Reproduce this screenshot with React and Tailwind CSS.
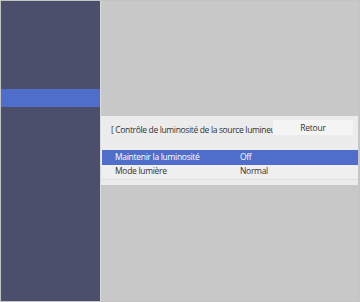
export default function App() {
  const rows = [
    { label: 'Maintenir la luminosité', value: 'Off', active: true },
    { label: 'Mode lumière', value: 'Normal', active: false },
  ];

  return (
    <div className="flex h-[302px] w-[360px] border border-[#c4c4c4] bg-[#c8c8c8] font-['Open_Sans',sans-serif] text-[#333]">
      <aside className="w-[99px] shrink-0 bg-[#4b4f6b] pt-[88px]">
        <div className="h-[18px] bg-[#4f6ecb]" />
      </aside>
      <div className="w-px shrink-0 bg-[#dadada]" />

      <main className="flex-1 pr-px pt-[115px]">
        <section className="h-[69px] bg-[#ececec]">
          <div className="flex items-start pl-[10px] pt-[4px]">
            <p className="w-[162px] overflow-hidden whitespace-nowrap pt-[2px] text-[8.5px] leading-[15px] tracking-[-0.35px]">
              [ Contrôle de luminosité de la source lumineuse ]
            </p>
            <button className="h-[15px] w-[80px] bg-[#f4f4f4] text-[8.5px] leading-[13px] tracking-[-0.2px]">
              Retour
            </button>
          </div>

          <ul className="mt-[13px] ml-px border-b border-[#e0e0e0]">
            {rows.map((row) => (
              <li
                key={row.label}
                className={`flex h-[14.5px] items-center pl-[13px] text-[8.5px] tracking-[-0.3px] ${
                  row.active ? 'bg-[#4f6ecb] text-white' : 'bg-[#efefef]'
                }`}
              >
                <span className="w-[125px]">{row.label}</span>
                <span>{row.value}</span>
              </li>
            ))}
          </ul>
        </section>
      </main>
    </div>
  );
}
